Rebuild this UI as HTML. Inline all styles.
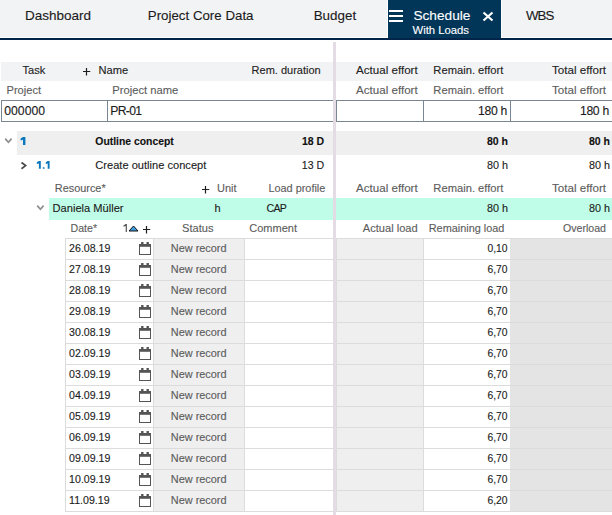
<!DOCTYPE html>
<html><head><meta charset="utf-8"><style>
html,body{margin:0;padding:0;width:612px;height:515px;overflow:hidden;background:#fff;position:relative}
body>div{position:absolute}
.t{font-family:"Liberation Sans", sans-serif;line-height:20px;white-space:nowrap;-webkit-text-stroke:0.12px currentColor}
</style></head><body>
<div style="left:0px;top:0px;width:612px;height:37px;background:#f2f3f5;"></div>
<div style="left:0px;top:37px;width:612px;height:1px;background:#ffffff;"></div>
<div style="left:387px;top:0px;width:1px;height:37px;background:#ffffff;"></div>
<div style="left:501px;top:0px;width:1px;height:37px;background:#ffffff;"></div>
<div style="left:388px;top:0px;width:113px;height:38px;background:#023659;"></div>
<div style="left:0px;top:38px;width:612px;height:2px;background:#00244a;"></div>
<div id="t0" class="t" style="left:25.0px;top:6px;font-size:13.5px;color:#1b1b1b;font-weight:400;">Dashboard</div>
<div id="t1" class="t" style="left:147.8px;top:6px;font-size:13.3px;color:#1b1b1b;font-weight:400;">Project Core Data</div>
<div id="t2" class="t" style="left:313.7px;top:6px;font-size:13.4px;color:#1b1b1b;font-weight:400;">Budget</div>
<div id="t3" class="t" style="left:525.9px;top:6px;font-size:13.3px;color:#1b1b1b;font-weight:400;letter-spacing:-0.9px;">WBS</div>
<div style="left:389px;top:10px;width:14px;height:2px;background:#ffffff;"></div>
<div style="left:389px;top:15px;width:14px;height:2px;background:#ffffff;"></div>
<div style="left:389px;top:20px;width:14px;height:2px;background:#ffffff;"></div>
<div id="t4" class="t" style="left:413.4px;top:6px;font-size:13.7px;color:#ffffff;font-weight:400;">Schedule</div>
<div id="t5" class="t" style="left:412.5px;top:20px;font-size:11.3px;color:#ffffff;font-weight:400;">With Loads</div>
<svg style="position:absolute;left:482px;top:11px" width="12" height="11" viewBox="0 0 12 11"><path d="M1.5 1.5 L10.5 9.5 M10.5 1.5 L1.5 9.5" stroke="#fff" stroke-width="2.2" fill="none"/></svg>
<div style="left:333px;top:42px;width:3px;height:473px;background:#e4dce5;"></div>
<div style="left:1px;top:62px;width:332px;height:19px;background:#f2f3f5;"></div>
<div style="left:336px;top:62px;width:276px;height:19px;background:#f2f3f5;"></div>
<div id="t6" class="t" style="left:22.5px;top:60px;font-size:11.1px;color:#222222;font-weight:400;">Task</div>
<svg style="position:absolute;left:83px;top:68px" width="8" height="8" viewBox="0 0 8 8"><path d="M3.5 0 V7.5 M-0.25 3.5 H7.25" stroke="#1e1e1e" stroke-width="1.2" fill="none"/></svg>
<div id="t7" class="t" style="left:98.5px;top:60px;font-size:11.1px;color:#222222;font-weight:400;">Name</div>
<div id="t8" class="t" style="right:291.3px;top:60px;font-size:11px;color:#222222;font-weight:400;">Rem. duration</div>
<div id="t9" class="t" style="right:194.3px;top:60px;font-size:11.6px;color:#222222;font-weight:400;">Actual effort</div>
<div id="t10" class="t" style="right:108.6px;top:60px;font-size:11.2px;color:#222222;font-weight:400;">Remain. effort</div>
<div id="t11" class="t" style="right:6.0px;top:60px;font-size:11.6px;color:#222222;font-weight:400;">Total effort</div>
<div id="t12" class="t" style="left:6.5px;top:80px;font-size:11.1px;color:#5c5c5c;font-weight:400;">Project</div>
<div id="t13" class="t" style="left:112.3px;top:80px;font-size:11.2px;color:#5c5c5c;font-weight:400;">Project name</div>
<div id="t14" class="t" style="right:194.3px;top:80px;font-size:11.6px;color:#5c5c5c;font-weight:400;">Actual effort</div>
<div id="t15" class="t" style="right:108.6px;top:80px;font-size:11.2px;color:#5c5c5c;font-weight:400;">Remain. effort</div>
<div id="t16" class="t" style="right:6.0px;top:80px;font-size:11.6px;color:#5c5c5c;font-weight:400;">Total effort</div>
<div style="left:1px;top:100px;width:332px;height:1px;background:#7b8693;"></div>
<div style="left:1px;top:121px;width:332px;height:1px;background:#7b8693;"></div>
<div style="left:1px;top:100px;width:1px;height:22px;background:#7b8693;"></div>
<div style="left:107px;top:100px;width:1px;height:22px;background:#7b8693;"></div>
<div style="left:336px;top:100px;width:276px;height:1px;background:#7b8693;"></div>
<div style="left:336px;top:121px;width:276px;height:1px;background:#7b8693;"></div>
<div style="left:336px;top:100px;width:1px;height:22px;background:#7b8693;"></div>
<div style="left:423px;top:100px;width:1px;height:22px;background:#7b8693;"></div>
<div style="left:510px;top:100px;width:1px;height:22px;background:#7b8693;"></div>
<div id="t17" class="t" style="left:4.3px;top:101px;font-size:12.2px;color:#1b1b1b;font-weight:400;">000000</div>
<div id="t18" class="t" style="left:110.3px;top:101px;font-size:12.2px;color:#1b1b1b;font-weight:400;letter-spacing:-0.7px;">PR-01</div>
<div id="t19" class="t" style="right:105.0px;top:101px;font-size:12.2px;color:#1b1b1b;font-weight:400;letter-spacing:-0.3px;">180 h</div>
<div id="t20" class="t" style="right:3.1px;top:101px;font-size:12.2px;color:#1b1b1b;font-weight:400;letter-spacing:-0.3px;">180 h</div>
<div style="left:17px;top:131px;width:316px;height:24px;background:#efefef;"></div>
<div style="left:336px;top:131px;width:276px;height:24px;background:#efefef;"></div>
<svg style="position:absolute;left:4px;top:137px" width="9" height="8" viewBox="0 0 9 8"><path d="M1.2 1.6 L4.4 5.2 L7.6 1.6" stroke="#8e8e8e" stroke-width="1.7" fill="none"/></svg>
<svg style="position:absolute;left:20px;top:136px" width="7" height="10" viewBox="0 0 7 10"><path d="M3 1 H5.4 V9.1 H3 V3.7 L0.6 4.4 V2.4 Z" fill="#0b78bd"/></svg>
<div id="t21" class="t" style="left:95.3px;top:132px;font-size:10.4px;color:#111;font-weight:700;">Outline concept</div>
<div id="t22" class="t" style="right:287.8px;top:131px;font-size:10.5px;color:#111;font-weight:700;">18 D</div>
<div id="t23" class="t" style="right:104.0px;top:131px;font-size:10.5px;color:#111;font-weight:700;">80 h</div>
<div id="t24" class="t" style="right:2.1px;top:131px;font-size:10.5px;color:#111;font-weight:700;">80 h</div>
<svg style="position:absolute;left:20px;top:161px" width="8" height="9" viewBox="0 0 8 9"><path d="M1.5 1.5 L5.6 4.6 L1.5 7.7" stroke="#4a4a4a" stroke-width="1.7" fill="none"/></svg>
<svg style="position:absolute;left:36px;top:160px" width="16" height="10" viewBox="0 0 16 10"><path d="M2.9 0.9 H4.8 V8.8 H2.9 V3.4 L0.8 4.0 V2.3 Z M6.8 7.2 H8.5 V8.8 H6.8 Z M11.7 0.9 H13.6 V8.8 H11.7 V3.4 L9.8 4.0 V2.3 Z" fill="#0b78bd"/></svg>
<div id="t25" class="t" style="left:95.3px;top:155px;font-size:11.1px;color:#1b1b1b;font-weight:400;">Create outline concept</div>
<div id="t26" class="t" style="right:287.8px;top:155px;font-size:10.6px;color:#1b1b1b;font-weight:400;">13 D</div>
<div id="t27" class="t" style="right:104.0px;top:155px;font-size:10.8px;color:#1b1b1b;font-weight:400;">80 h</div>
<div id="t28" class="t" style="right:2.1px;top:155px;font-size:10.8px;color:#1b1b1b;font-weight:400;">80 h</div>
<div id="t29" class="t" style="left:54.8px;top:178px;font-size:10.9px;color:#5c5c5c;font-weight:400;">Resource*</div>
<svg style="position:absolute;left:202px;top:186px" width="8" height="8" viewBox="0 0 8 8"><path d="M3.5 0 V7.5 M-0.25 3.5 H7.25" stroke="#1e1e1e" stroke-width="1.2" fill="none"/></svg>
<div id="t30" class="t" style="left:217.0px;top:178px;font-size:11.0px;color:#5c5c5c;font-weight:400;">Unit</div>
<div id="t31" class="t" style="right:286.7px;top:178px;font-size:10.9px;color:#5c5c5c;font-weight:400;">Load profile</div>
<div id="t32" class="t" style="right:194.3px;top:178px;font-size:11.6px;color:#5c5c5c;font-weight:400;">Actual effort</div>
<div id="t33" class="t" style="right:108.6px;top:178px;font-size:11.2px;color:#5c5c5c;font-weight:400;">Remain. effort</div>
<div id="t34" class="t" style="right:6.0px;top:178px;font-size:11.6px;color:#5c5c5c;font-weight:400;">Total effort</div>
<div style="left:49px;top:198px;width:284px;height:22px;background:#c0fde8;"></div>
<div style="left:336px;top:198px;width:276px;height:22px;background:#c0fde8;"></div>
<svg style="position:absolute;left:36px;top:204px" width="9" height="8" viewBox="0 0 9 8"><path d="M1.2 1.6 L4.4 5.2 L7.6 1.6" stroke="#8e8e8e" stroke-width="1.7" fill="none"/></svg>
<div id="t35" class="t" style="left:52.6px;top:198px;font-size:11.1px;color:#1b1b1b;font-weight:400;">Daniela Müller</div>
<div id="t36" class="t" style="left:214.5px;top:198px;font-size:11px;color:#1b1b1b;font-weight:400;">h</div>
<div id="t37" class="t" style="left:266.5px;top:198px;font-size:10.6px;color:#1b1b1b;font-weight:400;letter-spacing:-0.7px;">CAP</div>
<div id="t38" class="t" style="right:104.0px;top:198px;font-size:10.8px;color:#1b1b1b;font-weight:400;">80 h</div>
<div id="t39" class="t" style="right:2.1px;top:198px;font-size:10.8px;color:#1b1b1b;font-weight:400;">80 h</div>
<div id="t40" class="t" style="left:70.5px;top:218px;font-size:10.6px;color:#5c5c5c;font-weight:400;">Date*</div>
<svg style="position:absolute;left:123px;top:224px" width="5" height="8" viewBox="0 0 5 8"><path d="M2.7 0.1 H3.9 V7.9 H2.7 V1.9 L0.5 2.7 V1.6 Z" fill="#555"/></svg>
<svg style="position:absolute;left:128px;top:225px" width="11" height="7" viewBox="0 0 11 7"><path d="M1 6 L5.5 1 L10 6 Z" fill="#3d9ee0" stroke="#111" stroke-width="1"/></svg>
<svg style="position:absolute;left:143px;top:226px" width="8" height="8" viewBox="0 0 8 8"><path d="M3.5 0 V7.5 M-0.25 3.5 H7.25" stroke="#1e1e1e" stroke-width="1.2" fill="none"/></svg>
<div id="t41" class="t" style="left:182.0px;top:218px;font-size:11.1px;color:#5c5c5c;font-weight:400;">Status</div>
<div id="t42" class="t" style="left:249.3px;top:218px;font-size:11px;color:#5c5c5c;font-weight:400;">Comment</div>
<div id="t43" class="t" style="right:194.3px;top:218px;font-size:11.1px;color:#5c5c5c;font-weight:400;">Actual load</div>
<div id="t44" class="t" style="right:107.6px;top:218px;font-size:10.9px;color:#5c5c5c;font-weight:400;">Remaining load</div>
<div id="t45" class="t" style="right:6.0px;top:218px;font-size:10.6px;color:#5c5c5c;font-weight:400;">Overload</div>
<div style="left:154px;top:238px;width:90px;height:273px;background:#efefef;"></div>
<div style="left:337px;top:238px;width:86px;height:273px;background:#efefef;"></div>
<div style="left:510px;top:238px;width:102px;height:273px;background:#e4e4e4;"></div>
<div style="left:65px;top:238px;width:268px;height:1px;background:#dcdcdc;"></div>
<div style="left:336px;top:238px;width:276px;height:1px;background:#dcdcdc;"></div>
<div id="t46" class="t" style="left:69.1px;top:238px;font-size:10.6px;color:#1b1b1b;font-weight:400;">26.08.19</div>
<svg style="position:absolute;left:139px;top:242px" width="12" height="13" viewBox="0 0 12 13"><path d="M3.3 0 V3 M8.7 0 V3" stroke="#555" stroke-width="2.4"/><rect x="0.5" y="2.5" width="11" height="10" fill="#fff" stroke="#555" stroke-width="1"/><rect x="0" y="2" width="12" height="2.8" fill="#555"/></svg>
<div id="t47" class="t" style="left:198.7px;top:238px;font-size:10.9px;color:#5c5c5c;font-weight:400;transform:translateX(-50%);">New record</div>
<div id="t48" class="t" style="right:104.5px;top:239px;font-size:10.3px;color:#1b1b1b;font-weight:400;">0,10</div>
<div style="left:65px;top:259px;width:268px;height:1px;background:#dcdcdc;"></div>
<div style="left:336px;top:259px;width:276px;height:1px;background:#dcdcdc;"></div>
<div id="t49" class="t" style="left:69.1px;top:259px;font-size:10.6px;color:#1b1b1b;font-weight:400;">27.08.19</div>
<svg style="position:absolute;left:139px;top:263px" width="12" height="13" viewBox="0 0 12 13"><path d="M3.3 0 V3 M8.7 0 V3" stroke="#555" stroke-width="2.4"/><rect x="0.5" y="2.5" width="11" height="10" fill="#fff" stroke="#555" stroke-width="1"/><rect x="0" y="2" width="12" height="2.8" fill="#555"/></svg>
<div id="t50" class="t" style="left:198.7px;top:259px;font-size:10.9px;color:#5c5c5c;font-weight:400;transform:translateX(-50%);">New record</div>
<div id="t51" class="t" style="right:104.5px;top:260px;font-size:10.3px;color:#1b1b1b;font-weight:400;">6,70</div>
<div style="left:65px;top:280px;width:268px;height:1px;background:#dcdcdc;"></div>
<div style="left:336px;top:280px;width:276px;height:1px;background:#dcdcdc;"></div>
<div id="t52" class="t" style="left:69.1px;top:280px;font-size:10.6px;color:#1b1b1b;font-weight:400;">28.08.19</div>
<svg style="position:absolute;left:139px;top:284px" width="12" height="13" viewBox="0 0 12 13"><path d="M3.3 0 V3 M8.7 0 V3" stroke="#555" stroke-width="2.4"/><rect x="0.5" y="2.5" width="11" height="10" fill="#fff" stroke="#555" stroke-width="1"/><rect x="0" y="2" width="12" height="2.8" fill="#555"/></svg>
<div id="t53" class="t" style="left:198.7px;top:280px;font-size:10.9px;color:#5c5c5c;font-weight:400;transform:translateX(-50%);">New record</div>
<div id="t54" class="t" style="right:104.5px;top:281px;font-size:10.3px;color:#1b1b1b;font-weight:400;">6,70</div>
<div style="left:65px;top:301px;width:268px;height:1px;background:#dcdcdc;"></div>
<div style="left:336px;top:301px;width:276px;height:1px;background:#dcdcdc;"></div>
<div id="t55" class="t" style="left:69.1px;top:301px;font-size:10.6px;color:#1b1b1b;font-weight:400;">29.08.19</div>
<svg style="position:absolute;left:139px;top:305px" width="12" height="13" viewBox="0 0 12 13"><path d="M3.3 0 V3 M8.7 0 V3" stroke="#555" stroke-width="2.4"/><rect x="0.5" y="2.5" width="11" height="10" fill="#fff" stroke="#555" stroke-width="1"/><rect x="0" y="2" width="12" height="2.8" fill="#555"/></svg>
<div id="t56" class="t" style="left:198.7px;top:301px;font-size:10.9px;color:#5c5c5c;font-weight:400;transform:translateX(-50%);">New record</div>
<div id="t57" class="t" style="right:104.5px;top:302px;font-size:10.3px;color:#1b1b1b;font-weight:400;">6,70</div>
<div style="left:65px;top:322px;width:268px;height:1px;background:#dcdcdc;"></div>
<div style="left:336px;top:322px;width:276px;height:1px;background:#dcdcdc;"></div>
<div id="t58" class="t" style="left:69.1px;top:322px;font-size:10.6px;color:#1b1b1b;font-weight:400;">30.08.19</div>
<svg style="position:absolute;left:139px;top:326px" width="12" height="13" viewBox="0 0 12 13"><path d="M3.3 0 V3 M8.7 0 V3" stroke="#555" stroke-width="2.4"/><rect x="0.5" y="2.5" width="11" height="10" fill="#fff" stroke="#555" stroke-width="1"/><rect x="0" y="2" width="12" height="2.8" fill="#555"/></svg>
<div id="t59" class="t" style="left:198.7px;top:322px;font-size:10.9px;color:#5c5c5c;font-weight:400;transform:translateX(-50%);">New record</div>
<div id="t60" class="t" style="right:104.5px;top:323px;font-size:10.3px;color:#1b1b1b;font-weight:400;">6,70</div>
<div style="left:65px;top:343px;width:268px;height:1px;background:#dcdcdc;"></div>
<div style="left:336px;top:343px;width:276px;height:1px;background:#dcdcdc;"></div>
<div id="t61" class="t" style="left:69.1px;top:343px;font-size:10.6px;color:#1b1b1b;font-weight:400;">02.09.19</div>
<svg style="position:absolute;left:139px;top:347px" width="12" height="13" viewBox="0 0 12 13"><path d="M3.3 0 V3 M8.7 0 V3" stroke="#555" stroke-width="2.4"/><rect x="0.5" y="2.5" width="11" height="10" fill="#fff" stroke="#555" stroke-width="1"/><rect x="0" y="2" width="12" height="2.8" fill="#555"/></svg>
<div id="t62" class="t" style="left:198.7px;top:343px;font-size:10.9px;color:#5c5c5c;font-weight:400;transform:translateX(-50%);">New record</div>
<div id="t63" class="t" style="right:104.5px;top:344px;font-size:10.3px;color:#1b1b1b;font-weight:400;">6,70</div>
<div style="left:65px;top:364px;width:268px;height:1px;background:#dcdcdc;"></div>
<div style="left:336px;top:364px;width:276px;height:1px;background:#dcdcdc;"></div>
<div id="t64" class="t" style="left:69.1px;top:364px;font-size:10.6px;color:#1b1b1b;font-weight:400;">03.09.19</div>
<svg style="position:absolute;left:139px;top:368px" width="12" height="13" viewBox="0 0 12 13"><path d="M3.3 0 V3 M8.7 0 V3" stroke="#555" stroke-width="2.4"/><rect x="0.5" y="2.5" width="11" height="10" fill="#fff" stroke="#555" stroke-width="1"/><rect x="0" y="2" width="12" height="2.8" fill="#555"/></svg>
<div id="t65" class="t" style="left:198.7px;top:364px;font-size:10.9px;color:#5c5c5c;font-weight:400;transform:translateX(-50%);">New record</div>
<div id="t66" class="t" style="right:104.5px;top:365px;font-size:10.3px;color:#1b1b1b;font-weight:400;">6,70</div>
<div style="left:65px;top:385px;width:268px;height:1px;background:#dcdcdc;"></div>
<div style="left:336px;top:385px;width:276px;height:1px;background:#dcdcdc;"></div>
<div id="t67" class="t" style="left:69.1px;top:385px;font-size:10.6px;color:#1b1b1b;font-weight:400;">04.09.19</div>
<svg style="position:absolute;left:139px;top:389px" width="12" height="13" viewBox="0 0 12 13"><path d="M3.3 0 V3 M8.7 0 V3" stroke="#555" stroke-width="2.4"/><rect x="0.5" y="2.5" width="11" height="10" fill="#fff" stroke="#555" stroke-width="1"/><rect x="0" y="2" width="12" height="2.8" fill="#555"/></svg>
<div id="t68" class="t" style="left:198.7px;top:385px;font-size:10.9px;color:#5c5c5c;font-weight:400;transform:translateX(-50%);">New record</div>
<div id="t69" class="t" style="right:104.5px;top:386px;font-size:10.3px;color:#1b1b1b;font-weight:400;">6,70</div>
<div style="left:65px;top:406px;width:268px;height:1px;background:#dcdcdc;"></div>
<div style="left:336px;top:406px;width:276px;height:1px;background:#dcdcdc;"></div>
<div id="t70" class="t" style="left:69.1px;top:406px;font-size:10.6px;color:#1b1b1b;font-weight:400;">05.09.19</div>
<svg style="position:absolute;left:139px;top:410px" width="12" height="13" viewBox="0 0 12 13"><path d="M3.3 0 V3 M8.7 0 V3" stroke="#555" stroke-width="2.4"/><rect x="0.5" y="2.5" width="11" height="10" fill="#fff" stroke="#555" stroke-width="1"/><rect x="0" y="2" width="12" height="2.8" fill="#555"/></svg>
<div id="t71" class="t" style="left:198.7px;top:406px;font-size:10.9px;color:#5c5c5c;font-weight:400;transform:translateX(-50%);">New record</div>
<div id="t72" class="t" style="right:104.5px;top:407px;font-size:10.3px;color:#1b1b1b;font-weight:400;">6,70</div>
<div style="left:65px;top:427px;width:268px;height:1px;background:#dcdcdc;"></div>
<div style="left:336px;top:427px;width:276px;height:1px;background:#dcdcdc;"></div>
<div id="t73" class="t" style="left:69.1px;top:427px;font-size:10.6px;color:#1b1b1b;font-weight:400;">06.09.19</div>
<svg style="position:absolute;left:139px;top:431px" width="12" height="13" viewBox="0 0 12 13"><path d="M3.3 0 V3 M8.7 0 V3" stroke="#555" stroke-width="2.4"/><rect x="0.5" y="2.5" width="11" height="10" fill="#fff" stroke="#555" stroke-width="1"/><rect x="0" y="2" width="12" height="2.8" fill="#555"/></svg>
<div id="t74" class="t" style="left:198.7px;top:427px;font-size:10.9px;color:#5c5c5c;font-weight:400;transform:translateX(-50%);">New record</div>
<div id="t75" class="t" style="right:104.5px;top:428px;font-size:10.3px;color:#1b1b1b;font-weight:400;">6,70</div>
<div style="left:65px;top:448px;width:268px;height:1px;background:#dcdcdc;"></div>
<div style="left:336px;top:448px;width:276px;height:1px;background:#dcdcdc;"></div>
<div id="t76" class="t" style="left:69.1px;top:448px;font-size:10.6px;color:#1b1b1b;font-weight:400;">09.09.19</div>
<svg style="position:absolute;left:139px;top:452px" width="12" height="13" viewBox="0 0 12 13"><path d="M3.3 0 V3 M8.7 0 V3" stroke="#555" stroke-width="2.4"/><rect x="0.5" y="2.5" width="11" height="10" fill="#fff" stroke="#555" stroke-width="1"/><rect x="0" y="2" width="12" height="2.8" fill="#555"/></svg>
<div id="t77" class="t" style="left:198.7px;top:448px;font-size:10.9px;color:#5c5c5c;font-weight:400;transform:translateX(-50%);">New record</div>
<div id="t78" class="t" style="right:104.5px;top:449px;font-size:10.3px;color:#1b1b1b;font-weight:400;">6,70</div>
<div style="left:65px;top:469px;width:268px;height:1px;background:#dcdcdc;"></div>
<div style="left:336px;top:469px;width:276px;height:1px;background:#dcdcdc;"></div>
<div id="t79" class="t" style="left:69.1px;top:469px;font-size:10.6px;color:#1b1b1b;font-weight:400;">10.09.19</div>
<svg style="position:absolute;left:139px;top:473px" width="12" height="13" viewBox="0 0 12 13"><path d="M3.3 0 V3 M8.7 0 V3" stroke="#555" stroke-width="2.4"/><rect x="0.5" y="2.5" width="11" height="10" fill="#fff" stroke="#555" stroke-width="1"/><rect x="0" y="2" width="12" height="2.8" fill="#555"/></svg>
<div id="t80" class="t" style="left:198.7px;top:469px;font-size:10.9px;color:#5c5c5c;font-weight:400;transform:translateX(-50%);">New record</div>
<div id="t81" class="t" style="right:104.5px;top:470px;font-size:10.3px;color:#1b1b1b;font-weight:400;">6,70</div>
<div style="left:65px;top:490px;width:268px;height:1px;background:#dcdcdc;"></div>
<div style="left:336px;top:490px;width:276px;height:1px;background:#dcdcdc;"></div>
<div id="t82" class="t" style="left:69.1px;top:490px;font-size:10.6px;color:#1b1b1b;font-weight:400;">11.09.19</div>
<svg style="position:absolute;left:139px;top:494px" width="12" height="13" viewBox="0 0 12 13"><path d="M3.3 0 V3 M8.7 0 V3" stroke="#555" stroke-width="2.4"/><rect x="0.5" y="2.5" width="11" height="10" fill="#fff" stroke="#555" stroke-width="1"/><rect x="0" y="2" width="12" height="2.8" fill="#555"/></svg>
<div id="t83" class="t" style="left:198.7px;top:490px;font-size:10.9px;color:#5c5c5c;font-weight:400;transform:translateX(-50%);">New record</div>
<div id="t84" class="t" style="right:104.5px;top:491px;font-size:10.3px;color:#1b1b1b;font-weight:400;">6,20</div>
<div style="left:65px;top:511px;width:268px;height:1px;background:#dcdcdc;"></div>
<div style="left:336px;top:511px;width:276px;height:1px;background:#dcdcdc;"></div>
<div style="left:65px;top:238px;width:1px;height:274px;background:#dcdcdc;"></div>
<div style="left:153px;top:238px;width:1px;height:274px;background:#dcdcdc;"></div>
<div style="left:244px;top:238px;width:1px;height:274px;background:#dcdcdc;"></div>
<div style="left:336px;top:238px;width:1px;height:274px;background:#dcdcdc;"></div>
<div style="left:423px;top:238px;width:1px;height:274px;background:#dcdcdc;"></div>
</body></html>
